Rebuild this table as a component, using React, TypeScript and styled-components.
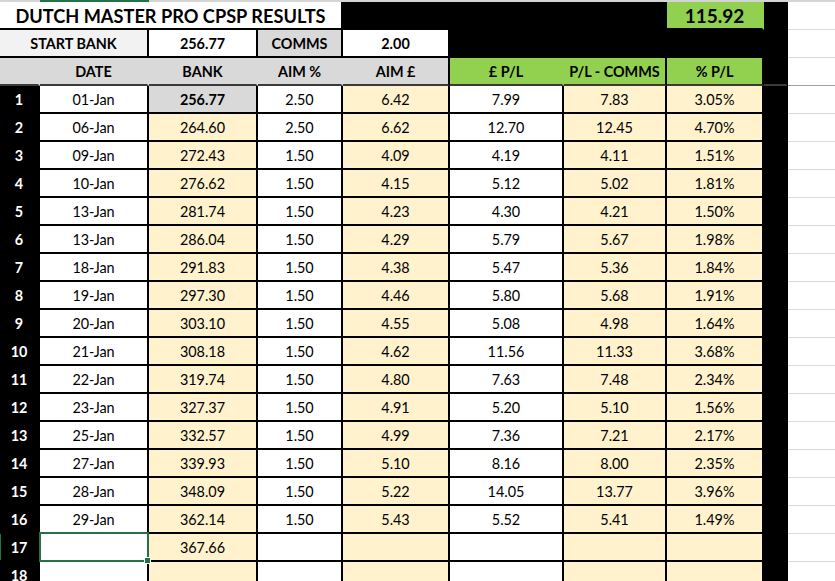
import styled, { createGlobalStyle } from "styled-components";

const GlobalStyle = createGlobalStyle`
  html, body {
    margin: 0;
    padding: 0;
    background: #fff;
    overflow: hidden;
  }
  body {
    font-family: Lato, "Liberation Sans", sans-serif;
    color: #000;
  }
`;

const CREAM = "#fff2cc";
const GREEN = "#92d050";
const GREY = "#d9d9d9";
const EXCEL_GREEN = "#217346";

const COLS = "40px 109px 109px 85px 107px 114px 103px 97px 24px 1fr";

const Sheet = styled.div`
  width: 835px;
  height: 581px;
  overflow: hidden;
`;

const Row = styled.div<{ $h?: number }>`
  display: grid;
  grid-template-columns: ${COLS};
  height: ${(p) => p.$h ?? 28}px;
`;

const Strip = styled.div<{ $on?: boolean }>`
  background: ${(p) => (p.$on ? EXCEL_GREEN : "#d4d4d4")};
`;

const Cell = styled.div<{
  $bg?: string;
  $bold?: boolean;
  $right?: string;
  $bottom?: string;
  $span?: number;
  $color?: string;
  $size?: number;
}>`
  grid-column: span ${(p) => p.$span ?? 1};
  display: flex;
  align-items: center;
  justify-content: center;
  box-sizing: border-box;
  padding-top: 1px;
  background: ${(p) => p.$bg ?? "#fff"};
  border-right: 2px solid ${(p) => p.$right ?? "#000"};
  border-bottom: 2px solid ${(p) => p.$bottom ?? "#000"};
  color: ${(p) => p.$color ?? "#000"};
  font-size: ${(p) => p.$size ?? 14.4}px;
  font-weight: ${(p) => (p.$bold ? 700 : 400)};
  white-space: nowrap;
`;

const RowHead = styled(Cell)<{ $active?: boolean }>`
  box-shadow: ${(p) => (p.$active ? `inset 1px 0 0 ${EXCEL_GREEN}` : "none")};
`;

const GridCell = styled.div<{ $line?: string }>`
  background: #fff;
  box-sizing: border-box;
  border-bottom: 1px solid ${(p) => p.$line ?? "#dadada"};
`;

const SelectedCell = styled(Cell)`
  position: relative;
`;

const Selection = styled.span`
  position: absolute;
  top: -2px;
  left: -1px;
  right: -2px;
  bottom: -2px;
  border: 2px solid ${EXCEL_GREEN};
  pointer-events: none;

  &::after {
    content: "";
    position: absolute;
    right: -4px;
    bottom: -4px;
    width: 5px;
    height: 5px;
    background: ${EXCEL_GREEN};
    border: 1px solid #fff;
  }
`;

type DataRow = [string, string, string, string, string, string, string];

const rows: DataRow[] = [
  ["01-Jan", "256.77", "2.50", "6.42", "7.99", "7.83", "3.05%"],
  ["06-Jan", "264.60", "2.50", "6.62", "12.70", "12.45", "4.70%"],
  ["09-Jan", "272.43", "1.50", "4.09", "4.19", "4.11", "1.51%"],
  ["10-Jan", "276.62", "1.50", "4.15", "5.12", "5.02", "1.81%"],
  ["13-Jan", "281.74", "1.50", "4.23", "4.30", "4.21", "1.50%"],
  ["13-Jan", "286.04", "1.50", "4.29", "5.79", "5.67", "1.98%"],
  ["18-Jan", "291.83", "1.50", "4.38", "5.47", "5.36", "1.84%"],
  ["19-Jan", "297.30", "1.50", "4.46", "5.80", "5.68", "1.91%"],
  ["20-Jan", "303.10", "1.50", "4.55", "5.08", "4.98", "1.64%"],
  ["21-Jan", "308.18", "1.50", "4.62", "11.56", "11.33", "3.68%"],
  ["22-Jan", "319.74", "1.50", "4.80", "7.63", "7.48", "2.34%"],
  ["23-Jan", "327.37", "1.50", "4.91", "5.20", "5.10", "1.56%"],
  ["25-Jan", "332.57", "1.50", "4.99", "7.36", "7.21", "2.17%"],
  ["27-Jan", "339.93", "1.50", "5.10", "8.16", "8.00", "2.35%"],
  ["28-Jan", "348.09", "1.50", "5.22", "14.05", "13.77", "3.96%"],
  ["29-Jan", "362.14", "1.50", "5.43", "5.52", "5.41", "1.49%"],
];

// background per data column: date, bank, aim %, aim £, £ p/l, p/l - comms, % p/l
const colBg = ["#fff", CREAM, "#fff", CREAM, "#fff", CREAM, CREAM];

const App = () => {
  return (
    <Sheet>
      <GlobalStyle />

      <Row $h={2}>
        <Strip />
        <Strip $on />
        <Strip />
        <Strip />
        <Strip />
        <Strip />
        <Strip />
        <Strip />
        <Strip />
        <Strip />
      </Row>

      <Row $h={28}>
        <Cell $span={4} $size={18.2} $bold>
          DUTCH MASTER PRO CPSP RESULTS
        </Cell>
        <Cell $span={3} $bg="#000" />
        <Cell $bg={GREEN} $right={GREEN} $size={19} $bold>
          115.92
        </Cell>
        <Cell $bg="#000" />
        <GridCell />
      </Row>

      <Row>
        <Cell $span={2} $bg="#f2f2f2" $bold>
          START BANK
        </Cell>
        <Cell $bold>256.77</Cell>
        <Cell $bg={GREY} $bold>
          COMMS
        </Cell>
        <Cell $bold>2.00</Cell>
        <Cell $span={4} $bg="#000" />
        <GridCell />
      </Row>

      <Row>
        <Cell $bg={GREY} $right={GREY} $bottom="#3a3a3a" />
        <Cell $bg={GREY} $right={GREY} $bottom="#3a3a3a" $bold>
          DATE
        </Cell>
        <Cell $bg={GREY} $right={GREY} $bottom="#3a3a3a" $bold>
          BANK
        </Cell>
        <Cell $bg={GREY} $right={GREY} $bottom="#3a3a3a" $bold>
          AIM %
        </Cell>
        <Cell $bg={GREY} $bottom="#3a3a3a" $bold>
          AIM £
        </Cell>
        <Cell $bg={GREEN} $right={GREEN} $bottom="#3a3a3a" $bold>
          £ P/L
        </Cell>
        <Cell $bg={GREEN} $bottom="#3a3a3a" $bold>
          P/L - COMMS
        </Cell>
        <Cell $bg={GREEN} $bottom="#3a3a3a" $bold>
          % P/L
        </Cell>
        <Cell $bg="#000" $bottom="#3a3a3a" />
        <GridCell $line="#a0a0a0" />
      </Row>

      {rows.map((r, idx) => (
        <Row key={idx}>
          <RowHead $bg="#000" $color="#fff" $bold>
            {idx + 1}
          </RowHead>
          {r.map((v, c) => (
            <Cell
              key={c}
              $bg={idx === 0 && c === 1 ? GREY : colBg[c]}
              $bold={idx === 0 && c === 1}
            >
              {v}
            </Cell>
          ))}
          <Cell $bg="#000" />
          <GridCell />
        </Row>
      ))}

      <Row>
        <RowHead $bg="#000" $color="#fff" $bold $active>
          17
        </RowHead>
        <SelectedCell>
          <Selection />
        </SelectedCell>
        <Cell $bg={CREAM}>367.66</Cell>
        <Cell />
        <Cell $bg={CREAM} />
        <Cell />
        <Cell $bg={CREAM} />
        <Cell $bg={CREAM} />
        <Cell $bg="#000" />
        <GridCell />
      </Row>

      <Row>
        <RowHead $bg="#000" $color="#fff" $bold>
          18
        </RowHead>
        {colBg.map((bg, c) => (
          <Cell key={c} $bg={bg} />
        ))}
        <Cell $bg="#000" />
        <GridCell />
      </Row>
    </Sheet>
  );
};

export default App;
